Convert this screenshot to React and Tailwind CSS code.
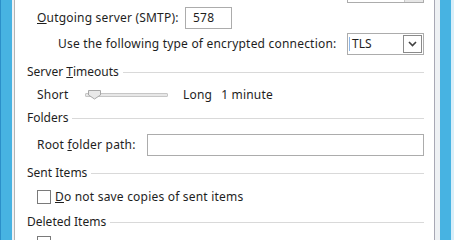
import React from "react";

const font = { fontFamily: '"Noto Sans", "Open Sans", Arial, sans-serif' };

function Header({ children, className = "" }) {
  return (
    <div className={`flex items-center h-[16px] pl-[12px] pr-[10px] ${className}`}>
      <span className="text-[12px] leading-[16px] text-[#1e1e1e] whitespace-nowrap">{children}</span>
      <div className="flex-1 h-px bg-[#d9d9d9] ml-[4px]" />
    </div>
  );
}

function Checkbox() {
  return <div className="w-[14px] h-[14px] border border-[#7a7a7a] bg-white shrink-0" />;
}

export default function App() {
  return (
    <div className="w-[454px] h-[240px] overflow-hidden flex bg-white" style={font}>
      {/* left frame */}
      <div className="w-[1px] bg-[#2b8fc9]" />
      <div className="w-[11px] bg-[#47b3e2]" />
      <div className="w-[2px] bg-[#eef1f4]" />
      <div className="w-[1px] bg-[#b4b4b4]" />

      {/* content */}
      <div className="flex-1 flex flex-col bg-white">
        {/* bottom of previous combobox */}
        <div className="h-[3px] flex">
          <div className="ml-[332px] w-[77px] h-[3px] border-x border-b border-[#acacac] flex justify-end">
            <div className="w-[19px] h-[2px] bg-[#e6e6e6] border-l border-[#c8c8c8]" />
          </div>
        </div>

        {/* Outgoing server */}
        <div className="mt-[4px] h-[22px] flex items-center pl-[22px]">
          <span className="text-[12px] tracking-[0.2px] text-[#1e1e1e] w-[148px] whitespace-nowrap">
            <span className="underline">O</span>utgoing server (SMTP):
          </span>
          <div className="w-[47px] h-[22px] border border-[#acacac] flex items-center pl-[7px] text-[12px] tracking-[0.2px] text-[#1e1e1e]">
            578
          </div>
        </div>

        {/* encrypted connection */}
        <div className="mt-[4px] h-[22px] flex items-center pl-[43px]">
          <span className="text-[12px] tracking-[0.2px] text-[#1e1e1e] w-[289px] whitespace-nowrap">
            Use the following type of encrypted connection:
          </span>
          <div className="w-[77px] h-[22px] border border-[#acacac] flex items-center">
            <div className="w-px h-[14px] bg-[#8fb8e8] ml-[1px]" />
            <span className="text-[12px] text-[#1e1e1e] ml-[2px] flex-1">TLS</span>
            <div className="w-[19px] h-[18px] border border-[#8a8a8a] bg-white mr-[1px] flex items-center justify-center">
              <svg width="9" height="6" viewBox="0 0 9 6">
                <path d="M1 1 L4.5 4.5 L8 1" fill="none" stroke="#404040" strokeWidth="1.6" />
              </svg>
            </div>
          </div>
        </div>

        <Header className="mt-[9px]">
          Server <span className="underline">T</span>imeouts
        </Header>

        {/* slider row */}
        <div className="mt-[7px] h-[16px] flex items-center pl-[22px]">
          <span className="text-[12px] tracking-[0.2px] text-[#1e1e1e] w-[48px]">Short</span>
          <div className="relative w-[83px] h-[16px] flex items-center">
            <div className="w-full h-[4px] bg-[#e7e7e7] border border-[#c6c6c6] rounded-[1px]" />
            <svg className="absolute left-[3px] top-[3px]" width="13" height="10" viewBox="0 0 13 10">
              <path d="M0.5 0.5 H12.5 V5 L6.5 9 L0.5 5 Z" fill="#e9e9e9" stroke="#a8a8a8" strokeWidth="1" />
            </svg>
          </div>
          <span className="text-[12px] tracking-[0.2px] text-[#1e1e1e] ml-[15px]">Long</span>
          <span className="text-[12px] tracking-[0.2px] text-[#1e1e1e] ml-[9px]">1 minute</span>
        </div>

        <Header className="mt-[7px]">Folders</Header>

        {/* root folder */}
        <div className="mt-[8px] h-[22px] flex items-center pl-[22px] pr-[10px]">
          <span className="text-[12px] tracking-[0.2px] text-[#1e1e1e] w-[110px] whitespace-nowrap">
            Root <span className="underline">f</span>older path:
          </span>
          <div className="flex-1 h-[22px] border border-[#acacac]" />
        </div>

        <Header className="mt-[9px]">Sent Items</Header>

        <div className="mt-[8px] h-[16px] flex items-center pl-[22px]">
          <Checkbox />
          <span className="text-[12px] tracking-[0.2px] text-[#1e1e1e] ml-[4px] whitespace-nowrap">
            <span className="underline">D</span>o not save copies of sent items
          </span>
        </div>

        <Header className="mt-[9px]">Deleted Items</Header>

        <div className="mt-[6px] flex pl-[22px]">
          <Checkbox />
        </div>
      </div>

      {/* right frame */}
      <div className="w-[1px] bg-[#a8a8b4]" />
      <div className="w-[5px] bg-[#eef1f4]" />
      <div className="w-[11px] bg-[#47b3e2]" />
      <div className="w-[3px] bg-[#d8eef9]" />
    </div>
  );
}
